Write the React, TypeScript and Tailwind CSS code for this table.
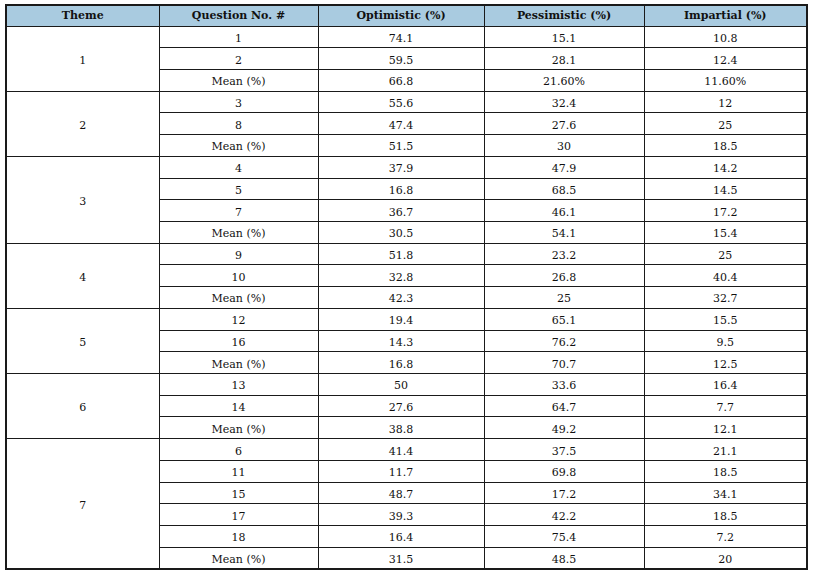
import React from "react";

type Group = { theme: string; rows: [string, string, string, string][] };

const groups: Group[] = [
  { theme: "1", rows: [["1", "74.1", "15.1", "10.8"], ["2", "59.5", "28.1", "12.4"], ["Mean (%)", "66.8", "21.60%", "11.60%"]] },
  { theme: "2", rows: [["3", "55.6", "32.4", "12"], ["8", "47.4", "27.6", "25"], ["Mean (%)", "51.5", "30", "18.5"]] },
  { theme: "3", rows: [["4", "37.9", "47.9", "14.2"], ["5", "16.8", "68.5", "14.5"], ["7", "36.7", "46.1", "17.2"], ["Mean (%)", "30.5", "54.1", "15.4"]] },
  { theme: "4", rows: [["9", "51.8", "23.2", "25"], ["10", "32.8", "26.8", "40.4"], ["Mean (%)", "42.3", "25", "32.7"]] },
  { theme: "5", rows: [["12", "19.4", "65.1", "15.5"], ["16", "14.3", "76.2", "9.5"], ["Mean (%)", "16.8", "70.7", "12.5"]] },
  { theme: "6", rows: [["13", "50", "33.6", "16.4"], ["14", "27.6", "64.7", "7.7"], ["Mean (%)", "38.8", "49.2", "12.1"]] },
  { theme: "7", rows: [["6", "41.4", "37.5", "21.1"], ["11", "11.7", "69.8", "18.5"], ["15", "48.7", "17.2", "34.1"], ["17", "39.3", "42.2", "18.5"], ["18", "16.4", "75.4", "7.2"], ["Mean (%)", "31.5", "48.5", "20"]] },
];

const cell = "border border-[#1a1a1a] text-center align-middle px-0";

export default function App() {
  return (
    <div className="w-[816px] h-[573px] bg-white overflow-hidden pt-[4px] pl-[5px]" style={{ fontFamily: '"DejaVu Serif", serif' }}>
      <table className="border-collapse table-fixed w-[801px] text-[11px] leading-[16px] text-[#111] border-2 border-[#1a1a1a]">
        <colgroup>
          <col className="w-[153px]" />
          <col className="w-[159px]" />
          <col className="w-[166px]" />
          <col className="w-[160px]" />
          <col className="w-[163px]" />
        </colgroup>
        <thead>
          <tr className="h-[21px] bg-[#a9cbe0]">
            <th className={`${cell} py-0 font-bold`}>Theme</th>
            <th className={`${cell} py-0 font-bold`}>Question No. #</th>
            <th className={`${cell} py-0 font-bold`}>Optimistic (%)</th>
            <th className={`${cell} py-0 font-bold`}>Pessimistic (%)</th>
            <th className={`${cell} py-0 font-bold`}>Impartial (%)</th>
          </tr>
        </thead>
        <tbody>
          {groups.map((g) =>
            g.rows.map((r, i) => (
              <tr key={g.theme + "-" + i} className="h-[21.72px]">
                {i === 0 && (
                  <td className={`${cell} pt-[4px] pb-0`} rowSpan={g.rows.length}>
                    {g.theme}
                  </td>
                )}
                {r.map((v, j) => (
                  <td key={j} className={`${cell} pt-[4px] pb-0`}>
                    {v}
                  </td>
                ))}
              </tr>
            ))
          )}
        </tbody>
      </table>
    </div>
  );
}
